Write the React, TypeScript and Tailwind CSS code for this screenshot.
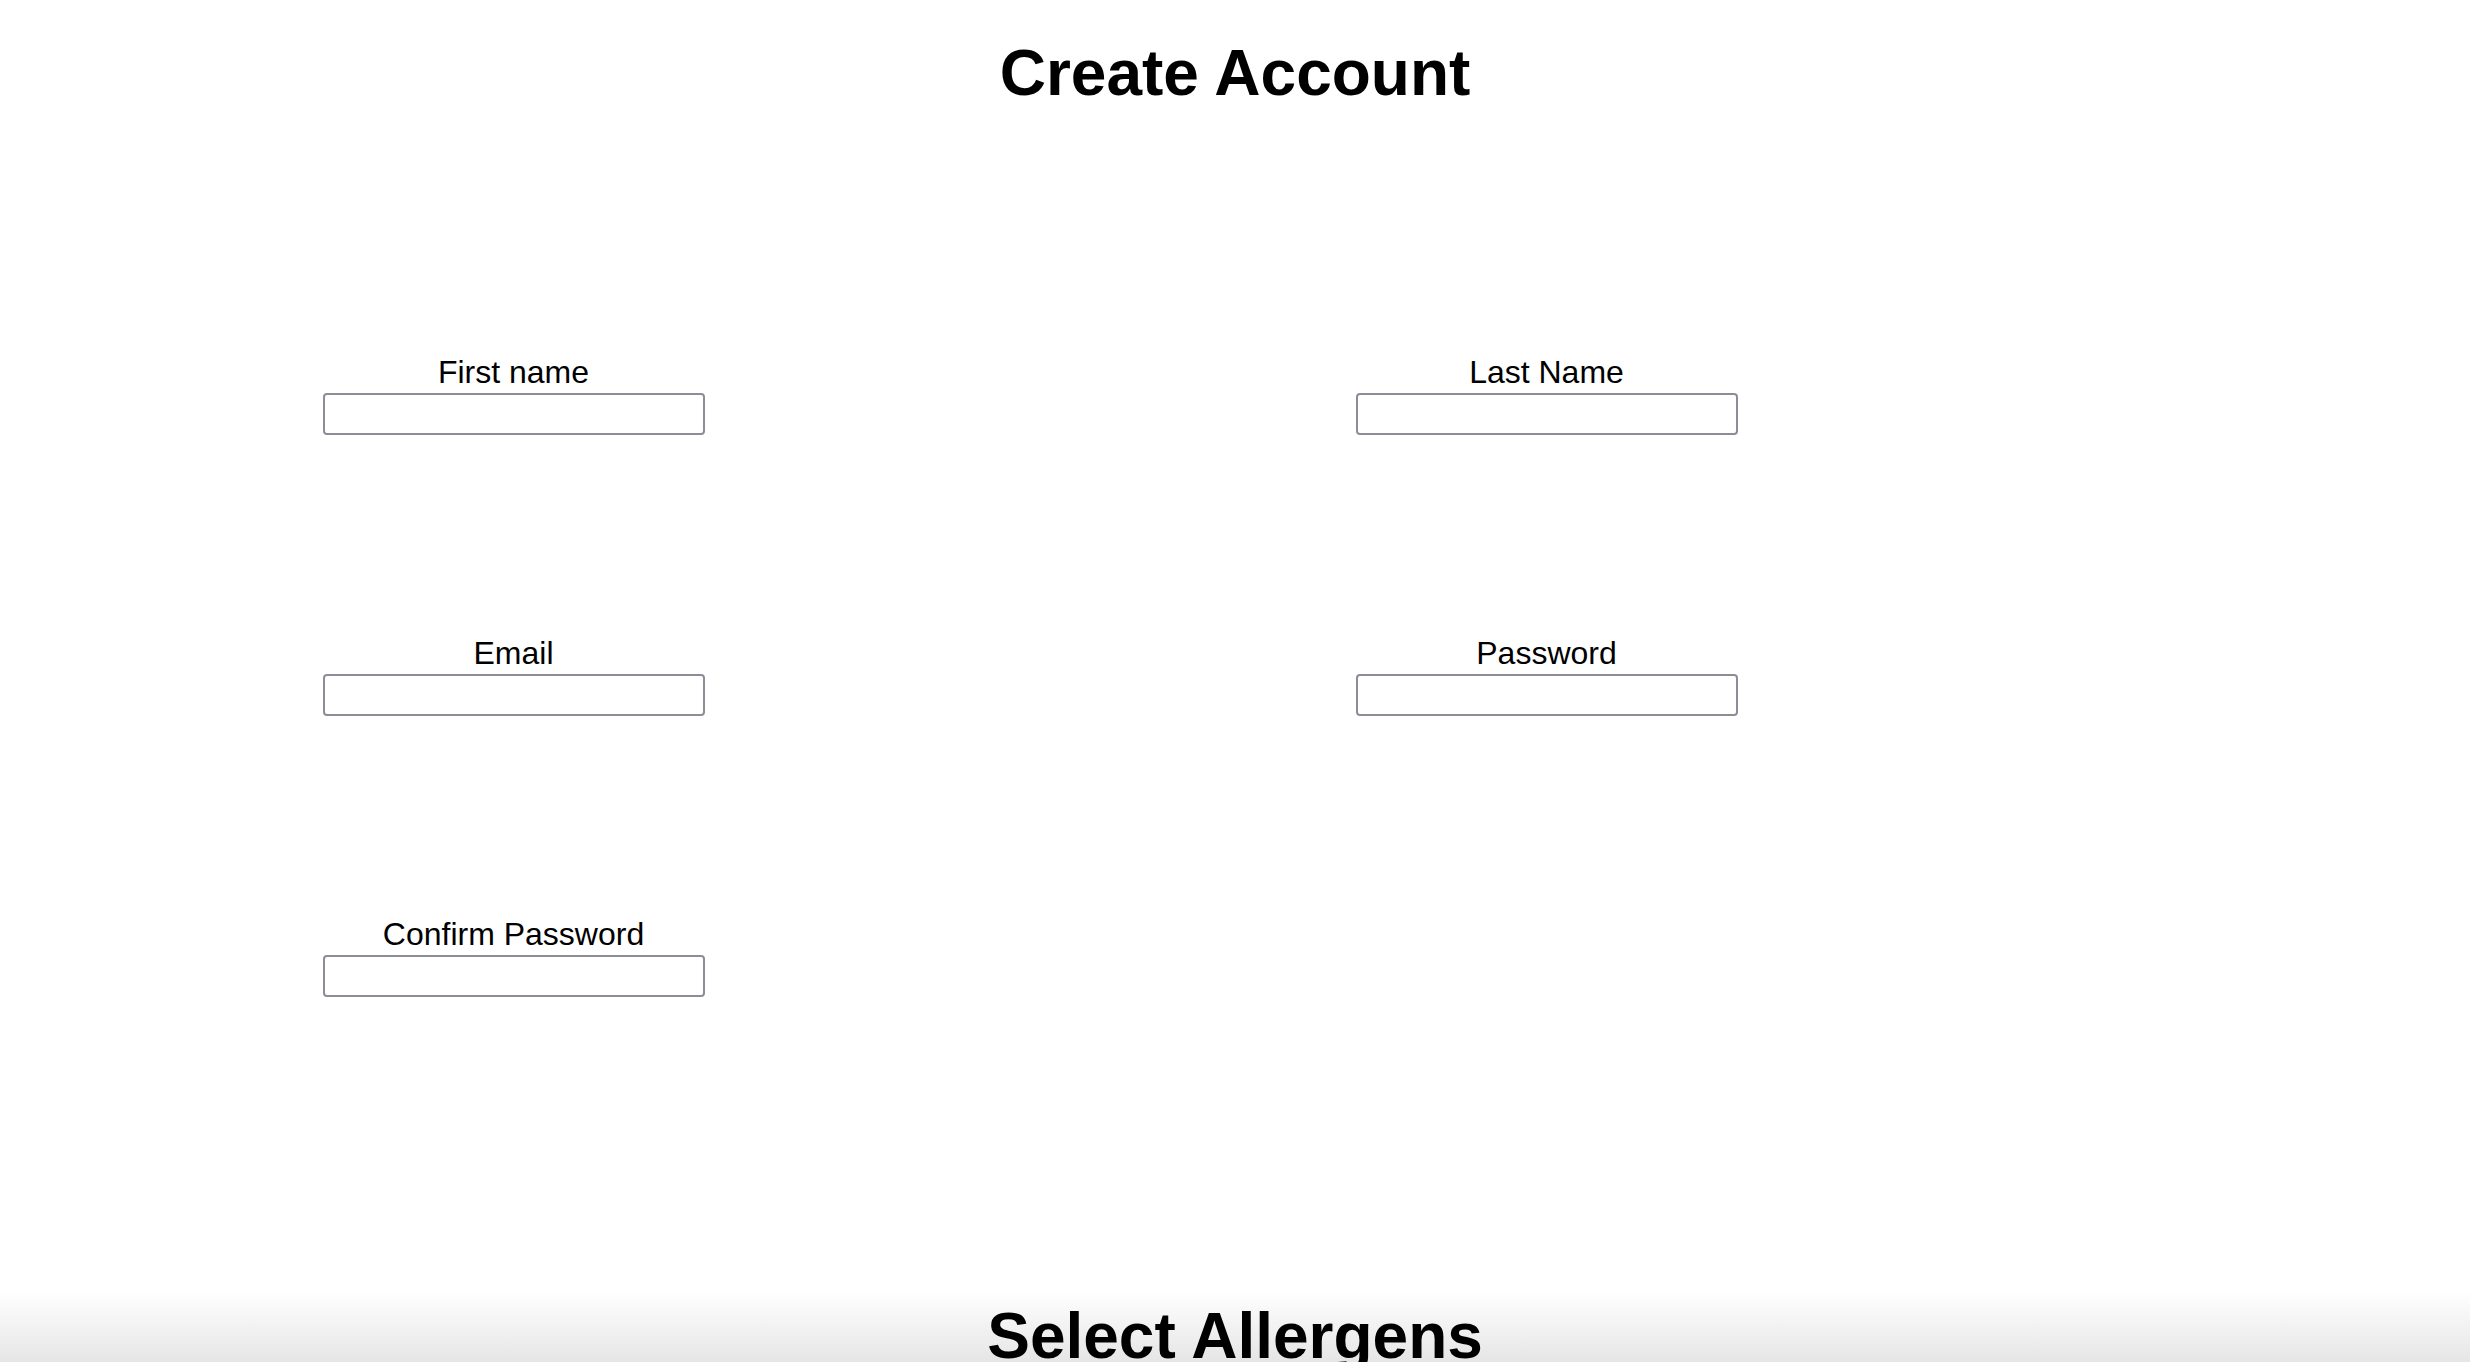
// App.tsx
interface FieldProps {
  label: string
  type?: string
}

const Field = ({ label, type = "text" }: FieldProps) => (
  <div className="flex flex-col items-center">
    <label className="text-[32px] leading-[37px] text-black">{label}</label>
    <input
      type={type}
      className="mt-[2px] w-[382px] h-[42px] border-2 border-[#8f8c9a] rounded-[4px] bg-white outline-none"
    />
  </div>
)

export default function App() {
  return (
    <div className="min-h-screen bg-white font-['Liberation_Sans',Arial,sans-serif] text-black overflow-hidden">
      <h1 className="pt-[37px] text-center text-[64px] leading-[73.5px] font-bold">Create Account</h1>

      <form className="mt-[243px] ml-[-3px] grid grid-cols-[1033px_1033px] gap-y-[200px]">
        <Field label="First name" />
        <Field label="Last Name" />
        <Field label="Email" type="email" />
        <Field label="Password" type="password" />
        <Field label="Confirm Password" type="password" />
      </form>

      <section className="mt-[294px] h-[400px] pt-[9px] bg-[linear-gradient(to_bottom,#ffffff_0px,#e5e5e5_72px,#d4d4d4_400px)]">
        <h2 className="text-center text-[64px] leading-[73.5px] font-bold">Select Allergens</h2>
      </section>
    </div>
  )
}
